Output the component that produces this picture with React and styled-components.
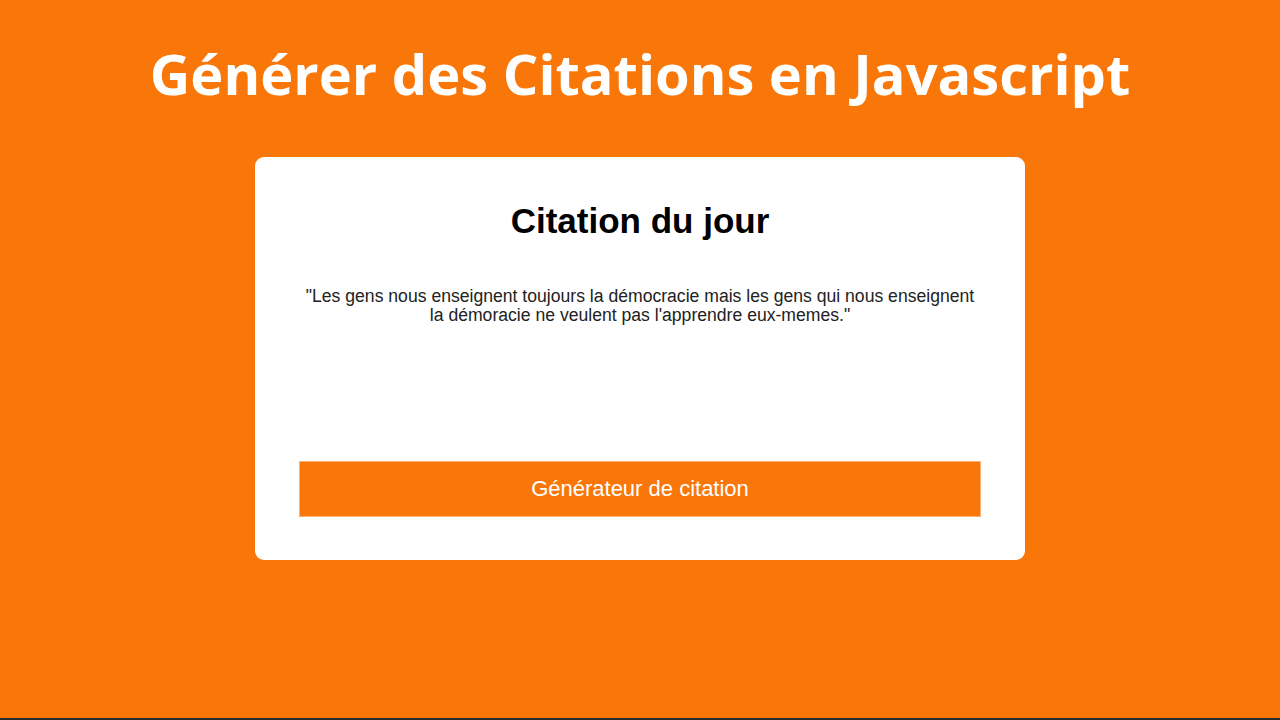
import React from "react";
import styled, { createGlobalStyle } from "styled-components";

const Global = createGlobalStyle`
  html, body { margin: 0; padding: 0; background: #F97708; }
  #root { min-height: 720px; }
`;

const Page = styled.div`
  height: 718px;
  background: #F97708;
  border-bottom: 2px solid #2b2b2b;
  display: flex;
  flex-direction: column;
  align-items: center;
  font-family: "Liberation Sans", Arial, sans-serif;
`;

const Title = styled.h1`
  margin: 36px 0 0;
  font-family: "Open Sans", sans-serif;
  font-weight: 700;
  font-size: 56px;
  line-height: 75px;
  color: #fff;
  text-align: center;
`;

const Card = styled.div`
  margin-top: 46px;
  width: 770px;
  height: 403px;
  box-sizing: border-box;
  background: #fff;
  border-radius: 9px;
  padding: 44px 44px 43px;
  display: flex;
  flex-direction: column;
  align-items: center;
`;

const CardTitle = styled.h2`
  margin: 0;
  font-size: 35px;
  font-weight: 700;
  line-height: 40px;
  color: #000;
`;

const Quote = styled.p`
  margin: 46px 0 0;
  max-width: 678px;
  font-size: 17.6px;
  line-height: 19px;
  color: #222;
  text-align: center;
  flex: 1;
`;

const Button = styled.button`
  width: 100%;
  height: 56px;
  background: #F97708;
  border: 1px solid #fbb27a;
  color: #fff;
  font-family: "Liberation Sans", Arial, sans-serif;
  font-size: 22px;
  cursor: pointer;
`;

export default function App() {
  return (
    <>
      <Global />
      <Page>
        <Title>Générer des Citations en Javascript</Title>
        <Card>
          <CardTitle>Citation du jour</CardTitle>
          <Quote>
            "Les gens nous enseignent toujours la démocracie mais les gens qui nous enseignent la démoracie ne veulent pas l'apprendre eux-memes."
          </Quote>
          <Button>Générateur de citation</Button>
        </Card>
      </Page>
    </>
  );
}
